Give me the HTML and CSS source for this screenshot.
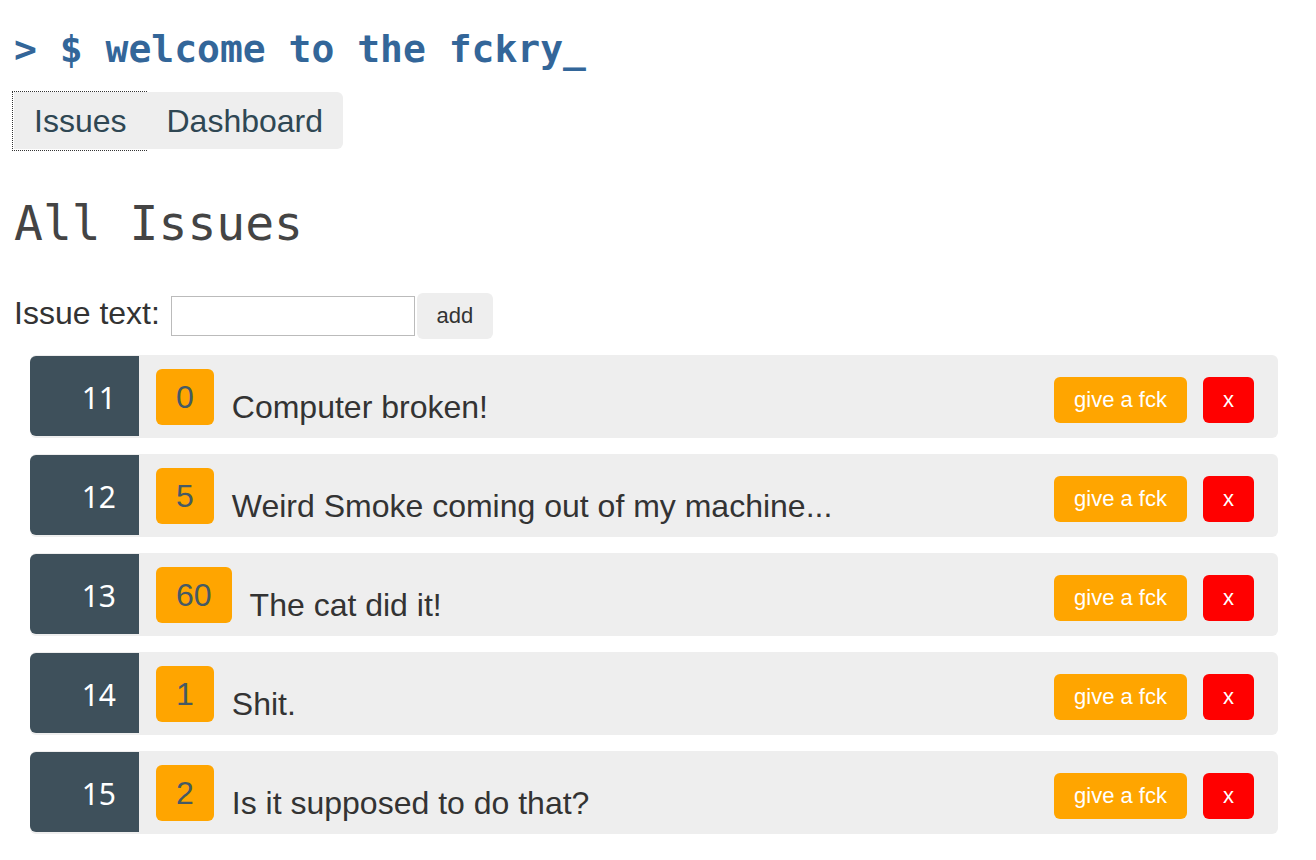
FILE: index.html
```html
<!DOCTYPE html>
<html lang="en">
<head>
<meta charset="utf-8">
<title>fckry</title>
<link rel="stylesheet" href="styles.css">
</head>
<body>
<h1 class="title">&gt; $ welcome to the fckry_</h1>
<nav class="nav">
  <a class="nav-btn nav-first is-focused">Issues</a>
  <a class="nav-btn nav-last">Dashboard</a>
</nav>
<h2 class="heading">All Issues</h2>
<div class="form">
  <label class="form-label">Issue text:</label>
  <input class="form-input" type="text">
  <button class="add-btn">add</button>
</div>
<ul class="issues">
  <li class="issue">
    <span class="badge">11</span>
    <span class="count">0</span>
    <span class="issue-text">Computer broken!</span>
    <span class="actions"><button class="btn-give">give a fck</button><button class="btn-del">x</button></span>
  </li>
  <li class="issue">
    <span class="badge">12</span>
    <span class="count">5</span>
    <span class="issue-text">Weird Smoke coming out of my machine...</span>
    <span class="actions"><button class="btn-give">give a fck</button><button class="btn-del">x</button></span>
  </li>
  <li class="issue">
    <span class="badge">13</span>
    <span class="count">60</span>
    <span class="issue-text">The cat did it!</span>
    <span class="actions"><button class="btn-give">give a fck</button><button class="btn-del">x</button></span>
  </li>
  <li class="issue">
    <span class="badge">14</span>
    <span class="count">1</span>
    <span class="issue-text">Shit.</span>
    <span class="actions"><button class="btn-give">give a fck</button><button class="btn-del">x</button></span>
  </li>
  <li class="issue">
    <span class="badge">15</span>
    <span class="count">2</span>
    <span class="issue-text">Is it supposed to do that?</span>
    <span class="actions"><button class="btn-give">give a fck</button><button class="btn-del">x</button></span>
  </li>
</ul>
</body>
</html>
```
FILE: styles.css
```css
* { box-sizing: border-box; }
html, body { margin: 0; padding: 0; background: #fff; }
body {
  padding: 0 0 0 14px;
  font-family: "Liberation Sans", Arial, sans-serif;
  color: #333;
}
.title {
  margin: 26px 0 0 0;
  font-family: "DejaVu Sans Mono", monospace;
  font-weight: bold;
  font-size: 38px;
  line-height: 46px;
  color: #336699;
}
.nav {
  display: flex;
  margin-top: 20px;
}
.nav-btn {
  display: block;
  position: relative;
  background: #eee;
  font-size: 32px;
  line-height: 36px;
  padding: 11px 20px 10px 20px;
  color: #2f4753;
  cursor: pointer;
}
.nav-first { border-radius: 0; }
.nav-last { border-radius: 0 6px 6px 0; }
.is-focused::after {
  content: "";
  position: absolute;
  top: -1px;
  left: -2px;
  right: -1px;
  bottom: -2px;
  border: 2px dotted #333;
  border-width: 1px;
  border-style: dotted;
}
.heading {
  margin: 46px 0 0 0;
  font-family: "DejaVu Sans Mono", monospace;
  font-weight: normal;
  font-size: 48px;
  line-height: 56px;
  color: #444;
}
.form {
  display: flex;
  align-items: center;
  margin-top: 42px;
}
.form-label {
  font-size: 32px;
  line-height: 36px;
  margin-right: 11px;
  margin-bottom: 6px;
}
.form-input {
  width: 244px;
  height: 40px;
  border: 1px solid #bbb;
  margin: 0;
  padding: 0 4px;
  font-size: 20px;
}
.add-btn {
  margin-left: 2px;
  height: 46px;
  width: 76px;
  border: none;
  border-radius: 6px;
  background: #eee;
  color: #333;
  font-family: "Liberation Sans", Arial, sans-serif;
  font-size: 22px;
  padding: 0;
}
.issues {
  list-style: none;
  margin: 16px 38px 0 16px;
  padding: 0;
  display: flex;
  flex-direction: column;
  gap: 16px;
}
.issue {
  display: flex;
  align-items: flex-start;
  height: 83px;
  background: #eee;
  border-radius: 6px;
}
.badge {
  margin-top: 1px;
  width: 109px;
  height: 80px;
  background: #3e505b;
  color: #fff;
  border-radius: 6px 0 0 6px;
  text-align: right;
  padding: 25px 23px 0 0;
  font-family: "Noto Sans", "Open Sans", sans-serif;
  font-size: 30px;
  line-height: 34px;
}
.count {
  margin: 14px 0 0 17px;
  height: 56px;
  padding: 10px 20px;
  background: #ffa500;
  border-radius: 6px;
  color: #455a64;
  font-size: 32px;
  line-height: 36px;
}
.issue-text {
  margin: 34px 0 0 18px;
  font-size: 32px;
  line-height: 36px;
  color: #333;
  flex: 1;
}
.actions {
  display: flex;
  gap: 16px;
  margin: 22px 24px 0 0;
}
.btn-give, .btn-del {
  border: none;
  border-radius: 6px;
  color: #fff;
  font-family: "Liberation Sans", Arial, sans-serif;
  font-size: 22px;
  line-height: 26px;
  height: 46px;
  margin: 0;
}
.btn-give { background: #ffa500; width: 133px; padding: 10px 0; }
.btn-del { background: #ff0000; width: 51px; padding: 10px 0; }
```
